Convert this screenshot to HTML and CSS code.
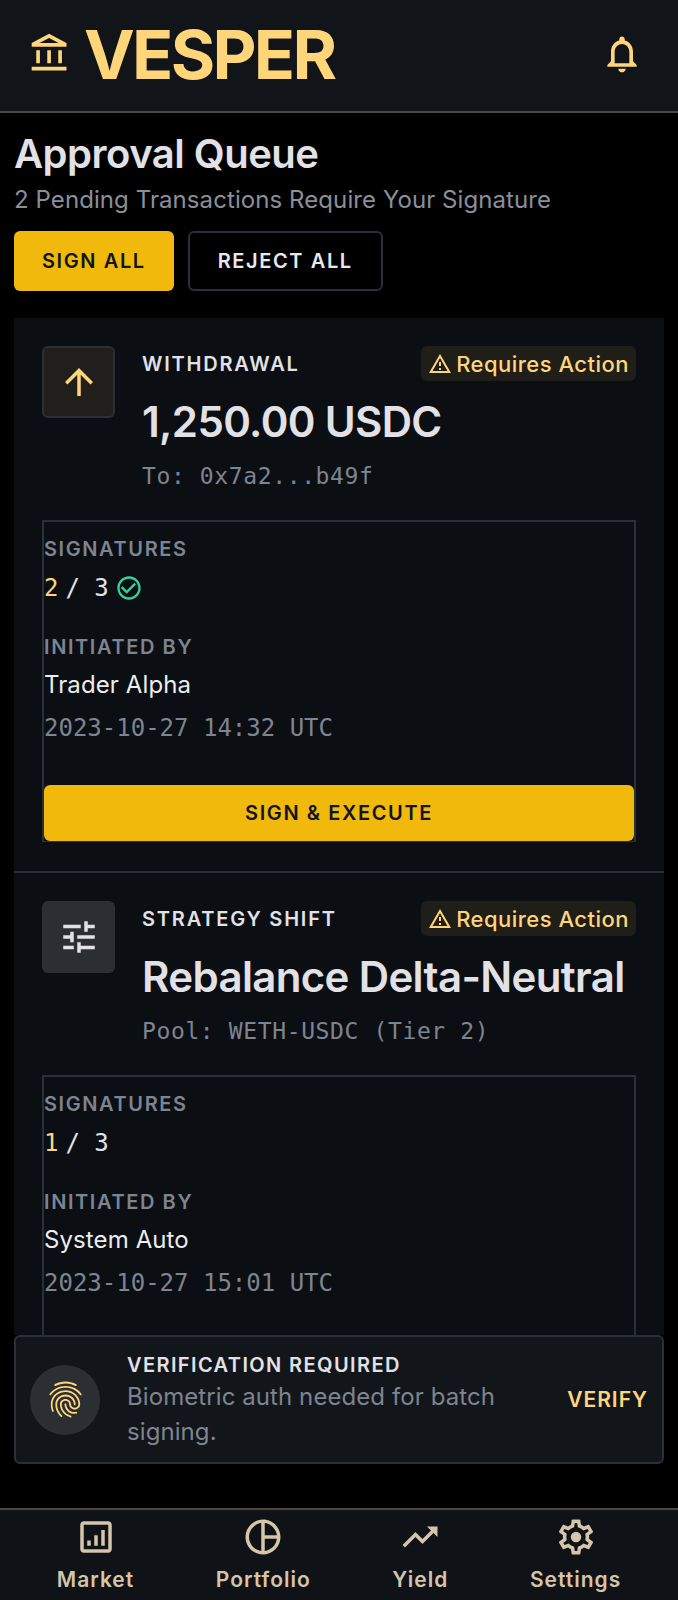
FILE: index.html
```html
<!DOCTYPE html>
<html lang="en">
<head>
    <meta charset="UTF-8">
    <meta name="viewport" content="width=device-width, initial-scale=1.0">
    <title>Vesper - Approval Queue</title>
    <link rel="stylesheet" href="styles.css">
</head>
<body>
    <header class="top-bar">
        <div class="brand">
            <svg class="brand-icon" viewBox="0 0 24 24"><path d="M6.5 10h-2v7h2v-7zm6 0h-2v7h2v-7zm8.5 9H2v2h19v-2zm-2.5-9h-2v7h2v-7zm-7-6.74L16.71 6H6.29l5.21-2.74m0-2.26L2 6v2h19V6l-9.5-5z"/></svg>
            <span class="brand-name">VESPER</span>
        </div>
        <svg class="bell-icon" viewBox="0 0 24 24"><path d="M12 22c1.1 0 2-.9 2-2h-4c0 1.1.9 2 2 2zm6-6v-5c0-3.07-1.63-5.64-4.5-6.32V4c0-.83-.67-1.5-1.5-1.5s-1.5.67-1.5 1.5v.68C7.64 5.36 6 7.92 6 11v5l-2 2v1h16v-1l-2-2zm-2 1H8v-6c0-2.48 1.51-4.5 4-4.5s4 2.02 4 4.5v6z"/></svg>
    </header>

    <main class="queue">
        <h1 class="queue-title">Approval Queue</h1>
        <p class="queue-sub">2 Pending Transactions Require Your Signature</p>
        <div class="queue-actions">
            <button class="btn btn-primary">SIGN ALL</button>
            <button class="btn btn-outline">REJECT ALL</button>
        </div>

        <section class="tx-list">
            <article class="tx-card">
                <div class="tx-head">
                    <div class="tx-icon tx-icon-gold">
                        <svg viewBox="0 0 24 24"><path d="M4 12l1.41 1.41L11 7.83V20h2V7.83l5.58 5.59L20 12l-8-8-8 8z"/></svg>
                    </div>
                    <div class="tx-info">
                        <div class="tx-info-top">
                            <span class="tx-type">WITHDRAWAL</span>
                            <span class="badge">
                                <svg viewBox="0 0 24 24"><path d="M12 5.99L19.53 19H4.47L12 5.99M12 2L1 21h22L12 2zm1 14h-2v2h2v-2zm0-6h-2v4h2v-4z"/></svg>
                                Requires Action
                            </span>
                        </div>
                        <div class="tx-amount">1,250.00 USDC</div>
                        <div class="tx-target">To: 0x7a2...b49f</div>
                    </div>
                </div>
                <div class="tx-detail">
                    <div class="detail-label">SIGNATURES</div>
                    <div class="sig-count">
                        <span class="sig-done">2</span><span class="sig-total">/ 3</span>
                        <svg class="sig-check" viewBox="0 0 24 24"><path d="M16.59 7.58L10 14.17l-3.59-3.58L5 12l5 5 8-8zM12 2C6.48 2 2 6.48 2 12s4.48 10 10 10 10-4.48 10-10S17.52 2 12 2zm0 18c-4.42 0-8-3.58-8-8s3.58-8 8-8 8 3.58 8 8-3.58 8-8 8z"/></svg>
                    </div>
                    <div class="detail-label detail-gap">INITIATED BY</div>
                    <div class="detail-name">Trader Alpha</div>
                    <div class="detail-date">2023-10-27 14:32 UTC</div>
                    <button class="btn btn-primary btn-wide">SIGN &amp; EXECUTE</button>
                </div>
            </article>

            <article class="tx-card">
                <div class="tx-head">
                    <div class="tx-icon tx-icon-grey">
                        <svg viewBox="0 0 24 24"><path d="M3 17v2h6v-2H3zM3 5v2h10V5H3zm10 16v-2h8v-2h-8v-2h-2v6h2zM7 9v2H3v2h4v2h2V9H7zm14 4v-2H11v2h10zm-6-4h2V7h4V5h-4V3h-2v6z"/></svg>
                    </div>
                    <div class="tx-info">
                        <div class="tx-info-top">
                            <span class="tx-type">STRATEGY SHIFT</span>
                            <span class="badge">
                                <svg viewBox="0 0 24 24"><path d="M12 5.99L19.53 19H4.47L12 5.99M12 2L1 21h22L12 2zm1 14h-2v2h2v-2zm0-6h-2v4h2v-4z"/></svg>
                                Requires Action
                            </span>
                        </div>
                        <div class="tx-amount">Rebalance Delta-Neutral</div>
                        <div class="tx-target">Pool: WETH-USDC (Tier 2)</div>
                    </div>
                </div>
                <div class="tx-detail tx-detail-open">
                    <div class="detail-label">SIGNATURES</div>
                    <div class="sig-count">
                        <span class="sig-done">1</span><span class="sig-total">/ 3</span>
                    </div>
                    <div class="detail-label detail-gap">INITIATED BY</div>
                    <div class="detail-name">System Auto</div>
                    <div class="detail-date">2023-10-27 15:01 UTC</div>
                </div>
            </article>
        </section>
    </main>

    <aside class="toast">
        <div class="toast-icon">
            <svg viewBox="0 0 24 24"><path d="M17.81 4.47c-.08 0-.16-.02-.23-.06C15.66 3.42 14 3 12.01 3c-1.98 0-3.86.47-5.57 1.41-.24.13-.54.04-.68-.2-.13-.24-.04-.55.2-.68C7.82 2.52 9.86 2 12.01 2c2.13 0 3.99.47 6.03 1.52.25.13.34.43.21.67-.09.18-.26.28-.44.28zM3.5 9.72c-.1 0-.2-.03-.29-.09-.23-.16-.28-.47-.12-.7.99-1.4 2.25-2.5 3.75-3.27C9.98 4.04 14 4.03 17.15 5.65c1.5.77 2.76 1.86 3.75 3.25.16.22.11.54-.12.7-.23.16-.54.11-.7-.12-.9-1.26-2.04-2.25-3.39-2.94-2.87-1.47-6.54-1.47-9.4.01-1.36.7-2.5 1.7-3.4 2.96-.08.14-.23.21-.39.21zm6.25 12.07c-.13 0-.26-.05-.35-.15-.87-.87-1.34-1.43-2.01-2.64-.69-1.23-1.05-2.73-1.05-4.34 0-2.97 2.54-5.39 5.66-5.39s5.66 2.42 5.66 5.39c0 .28-.22.5-.5.5s-.5-.22-.5-.5c0-2.42-2.09-4.39-4.66-4.39-2.57 0-4.66 1.97-4.66 4.39 0 1.44.32 2.77.93 3.85.64 1.15 1.08 1.64 1.85 2.42.19.2.19.51 0 .71-.11.1-.24.15-.37.15zm7.17-1.85c-1.19 0-2.24-.3-3.1-.89-1.49-1.01-2.38-2.65-2.38-4.39 0-.28.22-.5.5-.5s.5.22.5.5c0 1.41.72 2.74 1.94 3.56.71.48 1.54.71 2.54.71.24 0 .64-.03 1.04-.1.27-.05.53.13.58.41.05.27-.13.53-.41.58-.57.11-1.07.12-1.21.12zM14.91 22c-.04 0-.09-.01-.13-.02-1.59-.44-2.63-1.03-3.72-2.1-1.4-1.39-2.17-3.24-2.17-5.22 0-1.62 1.38-2.94 3.08-2.94 1.7 0 3.08 1.32 3.08 2.94 0 1.07.93 1.94 2.08 1.94s2.08-.87 2.08-1.94c0-3.77-3.25-6.83-7.25-6.83-2.84 0-5.44 1.58-6.61 4.03-.39.81-.59 1.76-.59 2.8 0 .78.07 2.01.67 3.61.1.26-.03.55-.29.64-.26.1-.55-.04-.64-.29-.49-1.31-.73-2.61-.73-3.96 0-1.2.23-2.29.68-3.24 1.33-2.79 4.28-4.6 7.51-4.6 4.55 0 8.25 3.51 8.25 7.83 0 1.62-1.38 2.94-3.08 2.94s-3.08-1.32-3.08-2.94c0-1.07-.93-1.94-2.08-1.94s-2.08.87-2.08 1.94c0 1.71.66 3.31 1.87 4.51.95.94 1.86 1.46 3.27 1.85.27.07.42.35.35.61-.05.23-.26.38-.47.38z"/></svg>
        </div>
        <div class="toast-text">
            <div class="toast-title">VERIFICATION REQUIRED</div>
            <div class="toast-desc">Biometric auth needed for batch signing.</div>
        </div>
        <span class="toast-action">VERIFY</span>
    </aside>

    <nav class="bottom-nav">
        <a class="nav-item">
            <svg viewBox="0 0 24 24"><path d="M19 3H5c-1.1 0-2 .9-2 2v14c0 1.1.9 2 2 2h14c1.1 0 2-.9 2-2V5c0-1.1-.9-2-2-2zm0 16H5V5h14v14zM7 14h2v3H7zM11 11h2v6h-2zM15 8h2v9h-2z"/></svg>
            <span>Market</span>
        </a>
        <a class="nav-item">
            <svg viewBox="0 0 24 24"><path d="M12 2C6.48 2 2 6.48 2 12s4.48 10 10 10 10-4.48 10-10S17.52 2 12 2zm7.93 9H13V4.07c3.61.45 6.48 3.32 6.93 6.93zM4 12c0-4.07 3.06-7.44 7-7.93v15.86c-3.94-.49-7-3.86-7-7.93zm9 7.93V13h6.93c-.45 3.61-3.32 6.48-6.93 6.93z"/></svg>
            <span>Portfolio</span>
        </a>
        <a class="nav-item">
            <svg viewBox="0 0 24 24"><path d="M16 6l2.29 2.29-4.88 4.88-4-4L2 16.59 3.41 18l6-6 4 4 6.3-6.29L22 12V6z"/></svg>
            <span>Yield</span>
        </a>
        <a class="nav-item">
            <svg viewBox="0 0 24 24"><path d="M19.43 12.98c.04-.32.07-.64.07-.98 0-.34-.03-.66-.07-.98l2.11-1.65c.19-.15.24-.42.12-.64l-2-3.46c-.09-.16-.26-.25-.44-.25-.06 0-.12.01-.17.03l-2.49 1c-.52-.4-1.08-.73-1.69-.98l-.38-2.65C14.46 2.18 14.25 2 14 2h-4c-.25 0-.46.18-.49.42l-.38 2.65c-.61.25-1.17.59-1.69.98l-2.49-1c-.06-.02-.12-.03-.18-.03-.17 0-.34.09-.43.25l-2 3.46c-.13.22-.07.49.12.64l2.11 1.65c-.04.32-.07.65-.07.98 0 .33.03.66.07.98l-2.11 1.65c-.19.15-.24.42-.12.64l2 3.46c.09.16.26.25.44.25.06 0 .12-.01.17-.03l2.49-1c.52.4 1.08.73 1.69.98l.38 2.65c.03.24.24.42.49.42h4c.25 0 .46-.18.49-.42l.38-2.65c.61-.25 1.17-.59 1.69-.98l2.49 1c.06.02.12.03.18.03.17 0 .34-.09.43-.25l2-3.46c.12-.22.07-.49-.12-.64l-2.11-1.65zm-1.98-1.71c.04.31.05.52.05.73 0 .21-.02.43-.05.73l-.14 1.13.89.7 1.08.84-.7 1.21-1.27-.51-1.04-.42-.9.68c-.43.32-.84.56-1.25.73l-1.06.43-.16 1.13-.2 1.35h-1.4l-.19-1.35-.16-1.13-1.06-.43c-.43-.18-.83-.41-1.23-.71l-.91-.7-1.06.43-1.27.51-.7-1.21 1.08-.84.89-.7-.14-1.13c-.03-.31-.05-.54-.05-.74s.02-.43.05-.73l.14-1.13-.89-.7-1.08-.84.7-1.21 1.27.51 1.04.42.9-.68c.43-.32.84-.56 1.25-.73l1.06-.43.16-1.13.2-1.35h1.39l.19 1.35.16 1.13 1.06.43c.43.18.83.41 1.23.71l.91.7 1.06-.43 1.27-.51.7 1.21-1.07.85-.89.7.14 1.13zM12 9a3 3 0 1 0 0 6 3 3 0 0 0 0-6z"/></svg>
            <span>Settings</span>
        </a>
    </nav>
</body>
</html>
```

FILE: styles.css
```css
* {
    box-sizing: border-box;
}
html, body {
    margin: 0;
    height: 100%;
}
body {
    display: flex;
    flex-direction: column;
    height: 1600px;
    overflow: hidden;
    background-color: #000000;
    color: #e2e2e6;
    font-family: 'Inter', 'Liberation Sans', sans-serif;
}

/* header */
.top-bar {
    flex: none;
    height: 113px;
    display: flex;
    align-items: center;
    justify-content: space-between;
    padding: 0 34px 3px 28px;
    background-color: #111418;
    border-bottom: 2px solid #4a4840;
}
.brand {
    display: flex;
    align-items: center;
    gap: 12px;
}
.brand-icon {
    width: 44px;
    height: 44px;
    fill: #ffd57a;
}
.brand-name {
    font-size: 68px;
    line-height: 80px;
    font-weight: 700;
    letter-spacing: -2.7px;
    color: #ffd57a;
}
.bell-icon {
    width: 44px;
    height: 44px;
    fill: #ffd57a;
}

/* queue */
.queue {
    flex: 1;
    min-height: 0;
    overflow: hidden;
    padding: 17px 14px 0;
}
.queue-title {
    margin: 0;
    font-size: 40px;
    line-height: 48px;
    font-weight: 600;
    letter-spacing: -0.5px;
}
.queue-sub {
    margin: 6px 0 0;
    font-size: 24px;
    line-height: 32px;
    letter-spacing: 0.08px;
    color: #8a8f9a;
}
.queue-actions {
    display: flex;
    gap: 14px;
    margin-top: 15px;
}
.btn {
    height: 60px;
    padding: 0 28px;
    border: none;
    border-radius: 6px;
    font-family: inherit;
    font-size: 20px;
    font-weight: 600;
    letter-spacing: 1.6px;
    cursor: pointer;
}
.btn-primary {
    background-color: #f0b90b;
    color: #111418;
}
.btn-outline {
    background-color: transparent;
    color: #e8e9ee;
    border: 2px solid #2b3038;
}
.btn-wide {
    display: block;
    width: 100%;
    height: 56px;
    margin-top: 41px;
}
.tx-list {
    margin-top: 27px;
}
.tx-card {
    padding: 28px 28px 29px;
    background-color: #0b0e13;
    border-bottom: 2px solid #2b3038;
}

.tx-head {
    display: flex;
    gap: 27px;
}
.tx-icon {
    flex: none;
    width: 73px;
    height: 72px;
    display: flex;
    align-items: center;
    justify-content: center;
    border-radius: 6px;
}
.tx-icon svg {
    width: 42px;
    height: 42px;
}
.tx-icon-gold {
    background-color: #211f1c;
    border: 2px solid #2b3038;
}
.tx-icon-gold svg {
    fill: #ffd57a;
}
.tx-icon-grey {
    background-color: #2b2f34;
}
.tx-icon-grey svg {
    fill: #e2e2e6;
}
.tx-info {
    flex: 1;
    min-width: 0;
}
.tx-info-top {
    display: flex;
    align-items: center;
    justify-content: space-between;
}
.tx-type {
    font-size: 20px;
    font-weight: 600;
    letter-spacing: 1.8px;
}
.badge {
    display: flex;
    align-items: center;
    gap: 4px;
    height: 35px;
    padding: 0 7px;
    border-radius: 6px;
    background-color: #201e19;
    color: #ffd57a;
    font-size: 22px;
    font-weight: 500;
    letter-spacing: 0.48px;
}
.badge svg {
    width: 24px;
    height: 24px;
    fill: #ffd57a;
}
.tx-amount {
    margin-top: 15px;
    font-size: 42px;
    line-height: 52px;
    font-weight: 600;
    letter-spacing: -0.64px;
    white-space: nowrap;
}
.tx-target {
    margin-top: 12px;
    font-family: 'DejaVu Sans Mono', 'Liberation Mono', monospace;
    font-size: 23px;
    line-height: 32px;
    letter-spacing: 0.62px;
    color: #7e8490;
}

.tx-detail {
    margin-top: 28px;
    border: 2px solid #2b3038;
    border-bottom-width: 1px;
}
/* second card runs on under the toast */
.tx-detail-open {
    padding-bottom: 60px;
}
.detail-label {
    margin-top: 13px;
    font-size: 20px;
    line-height: 28px;
    font-weight: 600;
    letter-spacing: 1.6px;
    color: #7e8490;
}
.detail-gap {
    margin-top: 29px;
}
.sig-count {
    display: flex;
    align-items: center;
    margin-top: 9px;
    height: 32px;
    font-family: 'DejaVu Sans Mono', 'Liberation Mono', monospace;
    font-size: 24px;
    white-space: pre;
}
.sig-done {
    color: #ffd57a;
}
.sig-total {
    margin-left: 7px;
}
.sig-check {
    width: 28px;
    height: 28px;
    margin-left: 6px;
    fill: #34d399;
}
.detail-name {
    margin-top: 8px;
    font-size: 24px;
    line-height: 32px;
    letter-spacing: 0.1px;
    color: #eceded;
}
.detail-date {
    margin-top: 11px;
    font-family: 'DejaVu Sans Mono', 'Liberation Mono', monospace;
    font-size: 24px;
    line-height: 32px;
    color: #7e8490;
}

/* verification toast */
.toast {
    flex: none;
    height: 129px;
    margin: 0 14px 44px;
    display: flex;
    align-items: center;
    gap: 27px;
    padding: 0 14px;
    background-color: #12161b;
    border: 2px solid #2b3038;
    border-radius: 6px;
}
.toast-icon {
    flex: none;
    width: 70px;
    height: 70px;
    display: flex;
    align-items: center;
    justify-content: center;
    border-radius: 50%;
    background-color: #2b2f34;
}
.toast-icon svg {
    width: 43px;
    height: 43px;
    fill: #ffd57a;
}
.toast-text {
    flex: 1;
    min-width: 0;
}
.toast-title {
    font-size: 20px;
    line-height: 28px;
    font-weight: 600;
    letter-spacing: 1.4px;
}
.toast-desc {
    font-size: 24px;
    line-height: 35px;
    letter-spacing: 0.08px;
    color: #7e8490;
}
.toast-action {
    flex: none;
    font-size: 21px;
    font-weight: 600;
    letter-spacing: 1px;
    color: #ffd57a;
}

/* bottom nav */
.bottom-nav {
    flex: none;
    height: 92px;
    display: flex;
    justify-content: space-around;
    align-items: flex-start;
    padding: 6px 16px 0;
    background-color: #0f1216;
    border-top: 2px solid #4f4537;
}
.nav-item {
    display: flex;
    flex-direction: column;
    align-items: center;
    gap: 7px;
    font-size: 21px;
    line-height: 30px;
    font-weight: 600;
    letter-spacing: 1px;
    color: #d4c5ab;
}
.nav-item svg {
    width: 42px;
    height: 42px;
    fill: #d4c5ab;
}
```
